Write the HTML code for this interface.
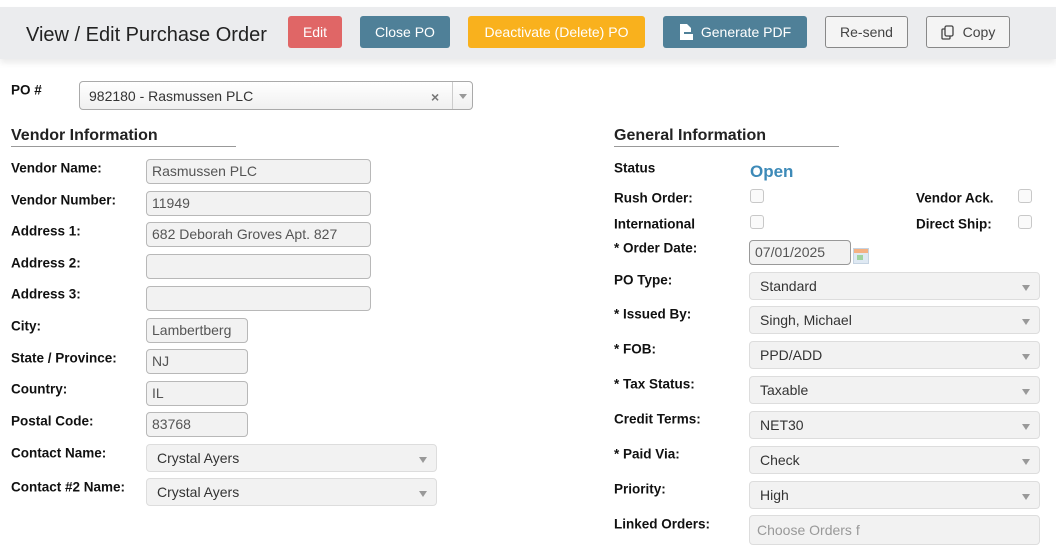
<!DOCTYPE html>
<html><head><meta charset="utf-8"><style>
*{box-sizing:border-box;margin:0;padding:0}
body{width:1056px;height:556px;background:#fff;font-family:"Liberation Sans",Arial,sans-serif;position:relative;overflow:hidden;color:#111}
.a{position:absolute}
.hdr{left:0;top:7px;width:1056px;height:52px;background:#ebecee;box-shadow:0 4px 6px rgba(0,0,0,0.08)}
.title{left:26px;top:24px;font-size:20px;color:#222}
.btn{position:absolute;top:16px;height:32px;border-radius:3px;font-size:14px;color:#fff;display:flex;align-items:center;justify-content:center}
.lbl{position:absolute;font-size:13.5px;font-weight:bold;color:#111;transform:translateY(-50%)}
.in{position:absolute;height:25px;background:#f2f2f2;border:1px solid #b8b8b8;border-radius:4px;font-size:14px;color:#555;padding-left:5px;line-height:23px}
.sel{position:absolute;height:28px;background:#f2f2f2;border:1px solid #ddd;border-radius:4px;font-size:14px;color:#333;padding-left:10px;line-height:27px}
.sel:after{content:"";position:absolute;right:9px;top:12px;border-left:4px solid transparent;border-right:4px solid transparent;border-top:6px solid #999}
.h{position:absolute;font-size:16px;font-weight:bold;color:#222;border-bottom:1px solid #999;padding-bottom:1px}
.cb{position:absolute;width:14px;height:14px;border:1px solid #c8c8c8;border-radius:3px;background:#fafafa}
</style></head><body>
<div class="a hdr"></div>
<div class="a title">View / Edit Purchase Order</div>
<div class="btn" style="left:288px;width:54px;background:#e06666">Edit</div>
<div class="btn" style="left:360px;width:90px;background:#4f8098">Close PO</div>
<div class="btn" style="left:468px;width:177px;background:#f9b11d">Deactivate (Delete) PO</div>
<div class="btn" style="left:663px;width:144px;background:#4f8098"><svg width="14" height="16" viewBox="0 0 14 16" style="margin-right:8px"><path d="M1 0h7l4 4v4H5v8H1z" fill="#fff"/><rect x="5" y="10" width="9" height="6" fill="#fff"/></svg>Generate PDF</div>
<div class="btn" style="left:825px;width:83px;background:#f4f4f4;border:1px solid #888;color:#444">Re-send</div>
<div class="btn" style="left:926px;width:84px;background:#f4f4f4;border:1px solid #888;color:#444"><svg width="13" height="15" viewBox="0 0 13 15" style="margin-right:9px"><rect x="4" y="1" width="8" height="10" rx="1.5" fill="none" stroke="#444" stroke-width="1.3"/><path d="M4 4H2a1 1 0 0 0-1 1v8a1 1 0 0 0 1 1h6a1 1 0 0 0 1-1v-2" fill="none" stroke="#444" stroke-width="1.3"/></svg>Copy</div>

<div class="lbl" style="left:11px;top:90px">PO #</div>
<div class="a" style="left:79px;top:81px;width:394px;height:29px;border:1px solid #aaa;border-radius:4px;background:linear-gradient(#fff,#f0f0f0);font-size:14px;color:#333;padding-left:9px;line-height:28px">982180 - Rasmussen PLC
<span class="a" style="left:351px;top:1px;color:#777;font-size:14px;font-weight:bold">×</span>
<span class="a" style="left:372px;top:0;width:1px;height:27px;background:#ccc"></span>
<span class="a" style="left:379px;top:12px;border-left:4px solid transparent;border-right:4px solid transparent;border-top:5px solid #999"></span></div>

<div class="h" style="left:11px;top:127px;width:225px">Vendor Information</div>
<div class="lbl" style="left:11px;top:168px">Vendor Name:</div><div class="in" style="left:146px;top:159px;width:225px">Rasmussen PLC</div>
<div class="lbl" style="left:11px;top:200px">Vendor Number:</div><div class="in" style="left:146px;top:191px;width:225px">11949</div>
<div class="lbl" style="left:11px;top:231px">Address 1:</div><div class="in" style="left:146px;top:222px;width:225px">682 Deborah Groves Apt. 827</div>
<div class="lbl" style="left:11px;top:263px">Address 2:</div><div class="in" style="left:146px;top:254px;width:225px"></div>
<div class="lbl" style="left:11px;top:294px">Address 3:</div><div class="in" style="left:146px;top:286px;width:225px"></div>
<div class="lbl" style="left:11px;top:326px">City:</div><div class="in" style="left:146px;top:318px;width:102px">Lambertberg</div>
<div class="lbl" style="left:11px;top:358px">State / Province:</div><div class="in" style="left:146px;top:349px;width:102px">NJ</div>
<div class="lbl" style="left:11px;top:389px">Country:</div><div class="in" style="left:146px;top:381px;width:102px">IL</div>
<div class="lbl" style="left:11px;top:421px">Postal Code:</div><div class="in" style="left:146px;top:412px;width:102px">83768</div>
<div class="lbl" style="left:11px;top:453px">Contact Name:</div><div class="sel" style="left:146px;top:444px;width:291px">Crystal Ayers</div>
<div class="lbl" style="left:11px;top:487px">Contact #2 Name:</div><div class="sel" style="left:146px;top:478px;width:291px">Crystal Ayers</div>

<div class="h" style="left:614px;top:127px;width:225px">General Information</div>
<div class="lbl" style="left:614px;top:168px">Status</div>
<div class="a" style="left:750px;top:162px;font-size:17px;font-weight:bold;color:#3d8ab8">Open</div>
<div class="lbl" style="left:614px;top:198px">Rush Order:</div><div class="cb" style="left:750px;top:189px"></div>
<div class="lbl" style="left:916px;top:198px">Vendor Ack.</div><div class="cb" style="left:1018px;top:189px"></div>
<div class="lbl" style="left:614px;top:224px">International</div><div class="cb" style="left:750px;top:215px"></div>
<div class="lbl" style="left:916px;top:224px">Direct Ship:</div><div class="cb" style="left:1018px;top:215px"></div>
<div class="lbl" style="left:614px;top:248px">* Order Date:</div>
<div class="in" style="left:749px;top:240px;width:102px;border-color:#999">07/01/2025</div>
<div class="a" style="left:853px;top:248px;width:16px;height:16px;background:#dfe9f3;border:1px solid #c6d4e2"><div style="height:4px;background:#f4b183"></div><div style="margin:2px 3px;height:5px;background:#9fd39f;width:6px"></div></div>
<div class="lbl" style="left:614px;top:280px">PO Type:</div><div class="sel" style="left:749px;top:272px;width:291px">Standard</div>
<div class="lbl" style="left:614px;top:314px">* Issued By:</div><div class="sel" style="left:749px;top:306px;width:291px">Singh, Michael</div>
<div class="lbl" style="left:614px;top:349px">* FOB:</div><div class="sel" style="left:749px;top:341px;width:291px">PPD/ADD</div>
<div class="lbl" style="left:614px;top:384px">* Tax Status:</div><div class="sel" style="left:749px;top:376px;width:291px">Taxable</div>
<div class="lbl" style="left:614px;top:419px">Credit Terms:</div><div class="sel" style="left:749px;top:411px;width:291px">NET30</div>
<div class="lbl" style="left:614px;top:454px">* Paid Via:</div><div class="sel" style="left:749px;top:446px;width:291px">Check</div>
<div class="lbl" style="left:614px;top:489px">Priority:</div><div class="sel" style="left:749px;top:481px;width:291px">High</div>
<div class="lbl" style="left:614px;top:524px">Linked Orders:</div>
<div class="a" style="left:749px;top:515px;width:291px;height:30px;background:#f2f2f2;border:1px solid #ddd;border-radius:4px;font-size:14px;color:#999;padding-left:7px;line-height:28px">Choose Orders f</div>
</body></html>
